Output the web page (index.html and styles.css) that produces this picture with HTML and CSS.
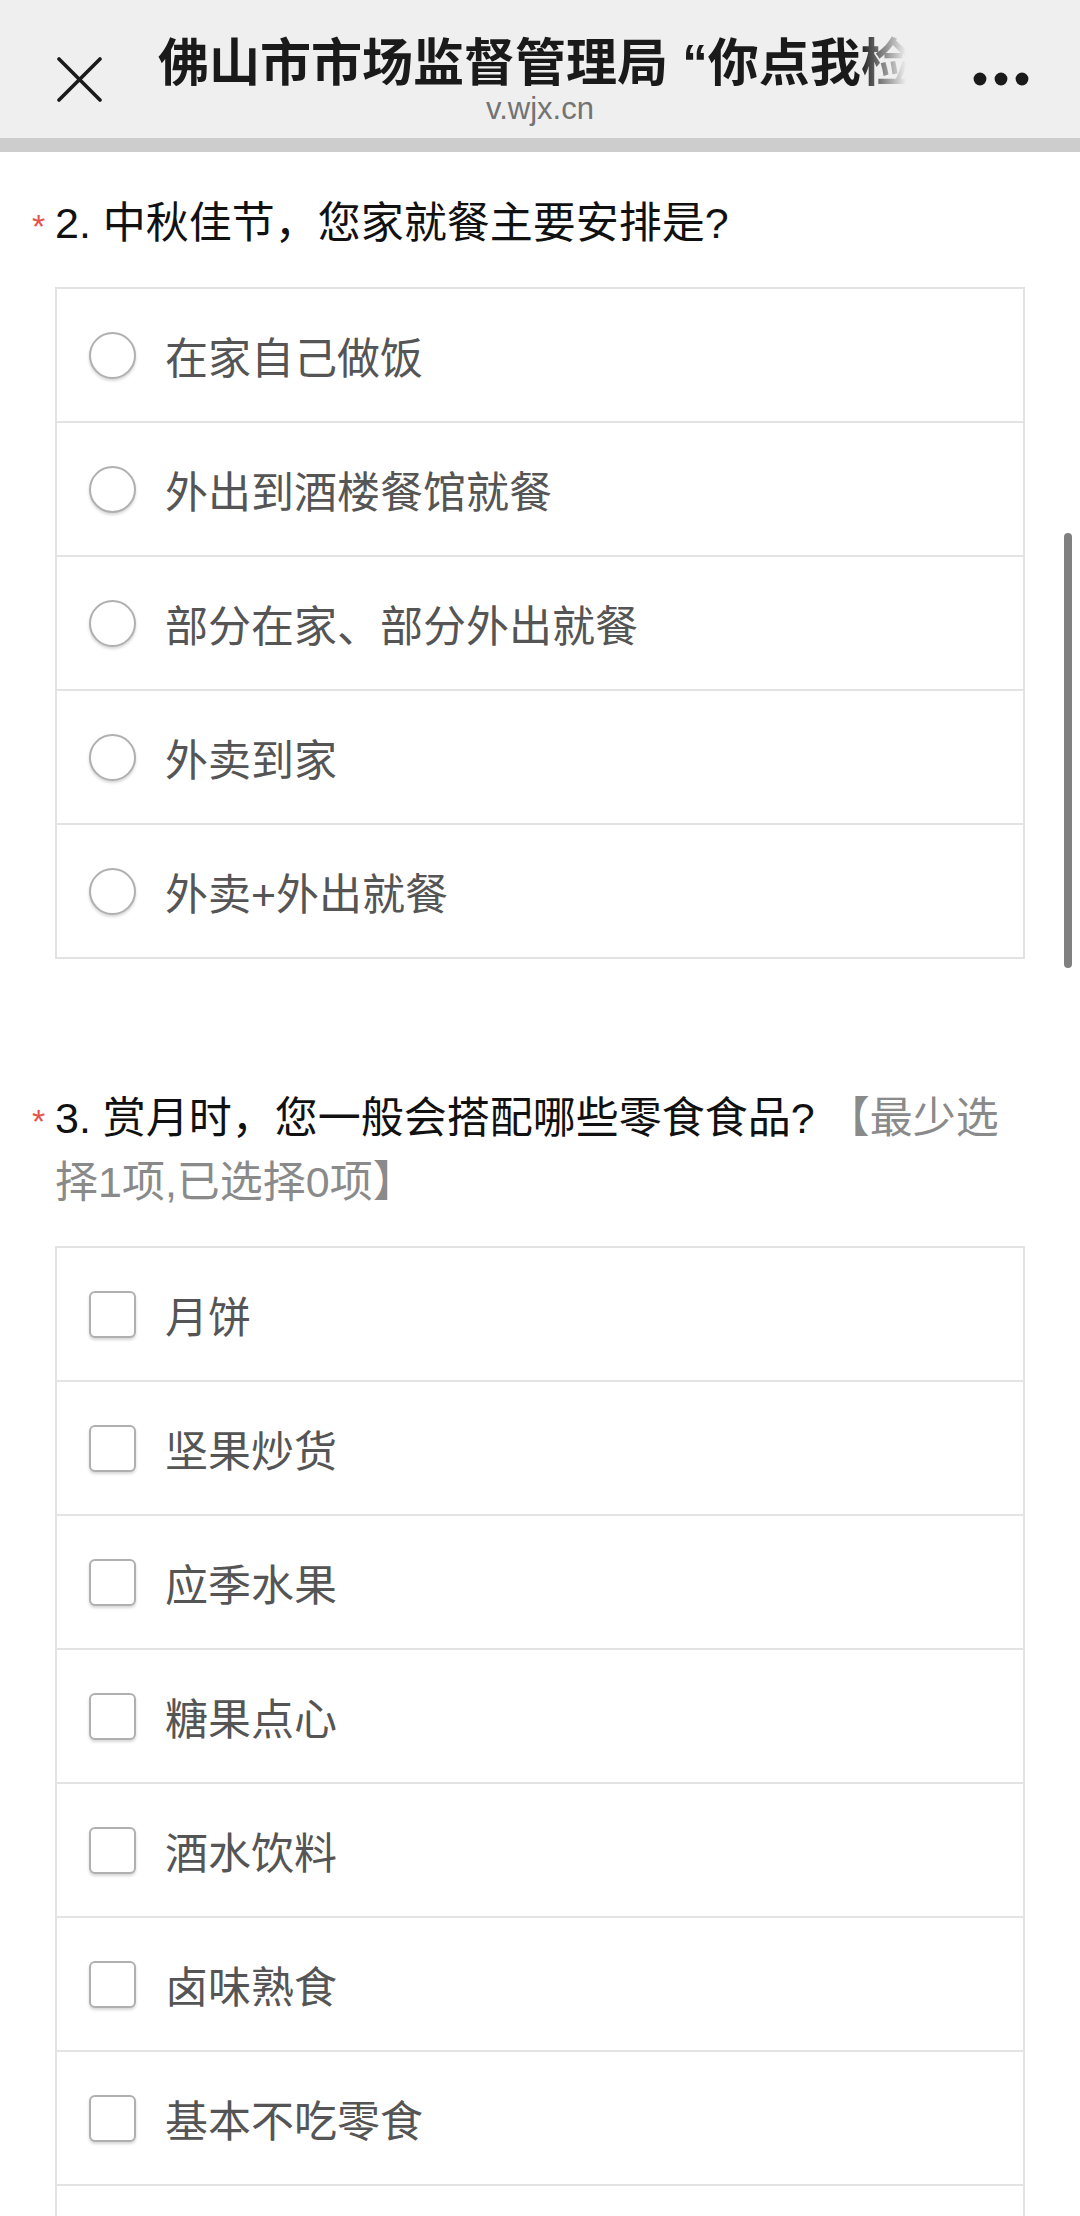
FILE: index.html
```html
<!DOCTYPE html>
<html lang="zh-CN">
<head>
  <meta charset="UTF-8">
  <meta name="viewport" content="width=device-width, initial-scale=1.0">
  <title>佛山市市场监督管理局 “你点我检”</title>
  <link rel="stylesheet" href="styles.css">
</head>
<body>
  <!-- Top bar -->
  <header class="topbar">
    <div class="topbar-side">
      <svg class="icon-close" width="45" height="45" viewBox="0 0 45 45">
        <path d="M2 2 L43 43 M43 2 L2 43" stroke="#1a1a1a" stroke-width="3.6" stroke-linecap="round" fill="none"/>
      </svg>
    </div>
    <div class="topbar-title">
      <div class="page-title">佛山市市场监督管理局 “你点我检”，我为你检</div>
      <div class="page-host">v.wjx.cn</div>
    </div>
    <div class="topbar-side">
      <svg class="icon-more" width="56" height="14" viewBox="0 0 56 14">
        <circle cx="7" cy="7" r="6.4" fill="#1a1a1a"/>
        <circle cx="28" cy="7" r="6.4" fill="#1a1a1a"/>
        <circle cx="49" cy="7" r="6.4" fill="#1a1a1a"/>
      </svg>
    </div>
  </header>
  <div class="progress"></div>

  <main class="survey">
    <!-- Question 2 -->
    <section class="question">
      <div class="q-head">
        <span class="req">*</span>
        <div class="q-text">2. 中秋佳节，您家就餐主要安排是?</div>
      </div>
      <ul class="options">
        <li class="option"><span class="radio"></span><span class="label">在家自己做饭</span></li>
        <li class="option"><span class="radio"></span><span class="label">外出到酒楼餐馆就餐</span></li>
        <li class="option"><span class="radio"></span><span class="label">部分在家、部分外出就餐</span></li>
        <li class="option"><span class="radio"></span><span class="label">外卖到家</span></li>
        <li class="option"><span class="radio"></span><span class="label">外卖+外出就餐</span></li>
      </ul>
    </section>

    <!-- Question 3 -->
    <section class="question">
      <div class="q-head">
        <span class="req">*</span>
        <div class="q-text">3. 赏月时，您一般会搭配哪些零食食品? <span class="q-hint">【最少选择1项,已选择0项】</span></div>
      </div>
      <ul class="options">
        <li class="option"><span class="check"></span><span class="label">月饼</span></li>
        <li class="option"><span class="check"></span><span class="label">坚果炒货</span></li>
        <li class="option"><span class="check"></span><span class="label">应季水果</span></li>
        <li class="option"><span class="check"></span><span class="label">糖果点心</span></li>
        <li class="option"><span class="check"></span><span class="label">酒水饮料</span></li>
        <li class="option"><span class="check"></span><span class="label">卤味熟食</span></li>
        <li class="option"><span class="check"></span><span class="label">基本不吃零食</span></li>
        <li class="option"><span class="check"></span><span class="label">其他</span></li>
      </ul>
    </section>
  </main>

  <div class="scrollbar"></div>
</body>
</html>
```

FILE: styles.css
```css
/* General */
* {
  margin: 0;
  padding: 0;
  box-sizing: border-box;
}

html,
body {
  height: 2216px;
  overflow: hidden;
}

body {
  font-family: "Liberation Sans", "Noto Sans CJK SC", sans-serif;
  background-color: #fff;
  color: #111;
}

/* Top bar */
.topbar {
  display: grid;
  grid-template-columns: 158px 1fr 158px;
  height: 138px;
  background-color: #efefef;
}

.topbar-side {
  display: flex;
  align-items: center;
  justify-content: center;
  padding-top: 20px;
}

.topbar-title {
  min-width: 0;
  padding-top: 34px;
  text-align: center;
}

.page-title {
  font-size: 51px;
  line-height: 60px;
  font-weight: bold;
  color: #1a1a1a;
  white-space: nowrap;
  overflow: hidden;
  text-align: left;
  -webkit-mask-image: linear-gradient(to right, #000 calc(100% - 62px), transparent calc(100% - 16px));
  mask-image: linear-gradient(to right, #000 calc(100% - 62px), transparent calc(100% - 16px));
}

.page-host {
  font-size: 31px;
  line-height: 30px;
  color: #737373;
}

.progress {
  height: 14px;
  background-color: #cdcdcd;
}

/* Survey */
.survey {
  padding: 39px 55px 0;
}

.question + .question {
  margin-top: 127px;
}

.q-head {
  display: flex;
  align-items: flex-start;
  margin-left: -24px;
  margin-bottom: 32px;
}

.req {
  flex: 0 0 24px;
  color: #e5544b;
  font-size: 34px;
  line-height: 58px;
  padding-top: 6px;
  padding-left: 1px;
}

.q-text {
  flex: 1;
  font-size: 43px;
  line-height: 64px;
  color: #111;
}

.q-hint {
  color: #8a8a8a;
}

/* Options */
.options {
  list-style: none;
  border: 2px solid #e3e3e3;
  border-bottom: none;
}

.option {
  display: flex;
  align-items: center;
  height: 134px;
  padding-left: 32px;
  border-bottom: 2px solid #e3e3e3;
}

.radio,
.check {
  flex: 0 0 47px;
  height: 47px;
  border: 2px solid #b0b0b0;
  background-color: #fff;
  box-shadow: 0 2px 3px rgba(0, 0, 0, 0.16);
  margin-right: 29px;
}

.radio {
  border-radius: 50%;
}

.check {
  border-radius: 6px;
}

.label {
  font-size: 43px;
  color: #555;
}

/* Scroll indicator overlay */
.scrollbar {
  position: fixed;
  top: 533px;
  right: 8px;
  width: 8px;
  height: 435px;
  border-radius: 4px;
  background-color: #808080;
}
```
